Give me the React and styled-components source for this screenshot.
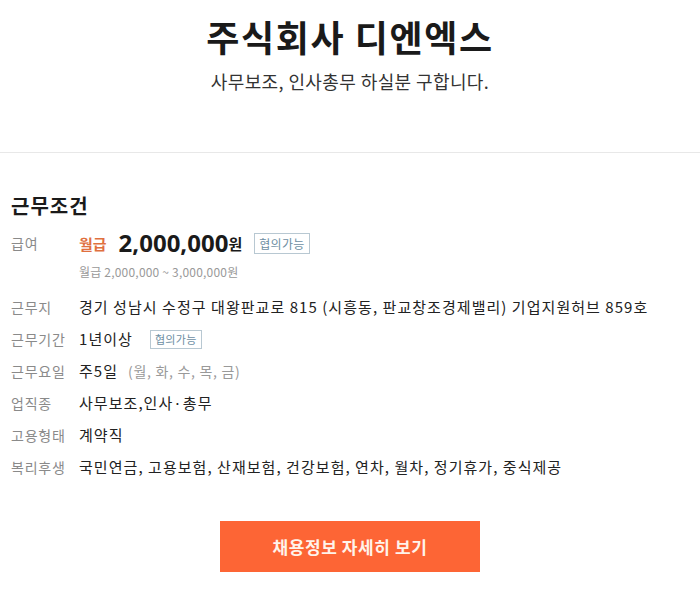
import React from "react";
import styled, { createGlobalStyle } from "styled-components";

const GlobalStyle = createGlobalStyle`
  body {
    margin: 0;
    background: #fff;
    font-family: "Noto Sans CJK KR", "Noto Sans", sans-serif;
    color: #222;
  }
`;

const rows = [
  {
    label: "근무지",
    value: "경기 성남시 수정구 대왕판교로 815 (시흥동, 판교창조경제밸리) 기업지원허브 859호",
  },
  { label: "근무기간", value: "1년이상", badge: true },
  { label: "근무요일", value: "주5일", extra: "(월, 화, 수, 목, 금)" },
  { label: "업직종", value: "사무보조,인사·총무" },
  { label: "고용형태", value: "계약직" },
  {
    label: "복리후생",
    value: "국민연금, 고용보험, 산재보험, 건강보험, 연차, 월차, 정기휴가, 중식제공",
  },
];

const App = () => {
  return (
    <Page>
      <GlobalStyle />
      <Header>
        <Title>주식회사 디엔엑스</Title>
        <Subtitle>사무보조, 인사총무 하실분 구합니다.</Subtitle>
      </Header>
      <Section>
        <SectionTitle>근무조건</SectionTitle>
        <InfoList>
          <Row $tall>
            <Label>급여</Label>
            <div>
              <SalaryLine>
                <PayType>월급</PayType>
                <Amount>2,000,000</Amount>
                <Won>원</Won>
                <Badge>협의가능</Badge>
              </SalaryLine>
              <SalaryRange>월급 2,000,000 ~ 3,000,000원</SalaryRange>
            </div>
          </Row>
          {rows.map((r) => (
            <Row key={r.label}>
              <Label>{r.label}</Label>
              <Value>
                {r.value}
                {r.extra && <Extra>{r.extra}</Extra>}
                {r.badge && <Badge $small>협의가능</Badge>}
              </Value>
            </Row>
          ))}
        </InfoList>
        <ButtonWrap>
          <DetailButton>채용정보 자세히 보기</DetailButton>
        </ButtonWrap>
      </Section>
    </Page>
  );
};

export default App;

const Page = styled.div`
  width: 700px;
  min-height: 613px;
`;

const Header = styled.header`
  display: flex;
  flex-direction: column;
  align-items: center;
  padding-top: 13px;
  height: 139px;
  border-bottom: 1px solid #e8e8e8;
`;

const Title = styled.h1`
  margin: 0;
  font-size: 36px;
  line-height: 46px;
  font-weight: 700;
  color: #1a1a1a;
  letter-spacing: 1.6px;
`;

const Subtitle = styled.p`
  margin: 0;
  margin-top: 10px;
  font-size: 18px;
  line-height: 24px;
  color: #333;
  letter-spacing: 0.4px;
`;

const Section = styled.section`
  padding: 39px 11px 0;
`;

const SectionTitle = styled.h2`
  margin: 0;
  font-size: 20px;
  line-height: 28px;
  font-weight: 700;
  color: #1a1a1a;
  letter-spacing: 1px;
`;

const InfoList = styled.div`
  margin-top: 12px;
  display: flex;
  flex-direction: column;
`;

const Row = styled.div`
  display: grid;
  grid-template-columns: 68px 1fr;
  align-items: start;
  min-height: 32px;
  ${(p) => p.$tall && "min-height: 64px;"}
`;

const Label = styled.span`
  font-size: 14px;
  line-height: 22px;
  color: #8a8a8a;
  letter-spacing: 0.8px;
`;

const Value = styled.span`
  display: flex;
  align-items: center;
  font-size: 15px;
  line-height: 22px;
  color: #222;
  letter-spacing: 1.05px;
`;

const Extra = styled.span`
  margin-left: 10px;
  font-size: 14px;
  color: #999;
  letter-spacing: 0.7px;
`;

const SalaryLine = styled.div`
  display: flex;
  align-items: center;
  height: 22px;
`;

const PayType = styled.span`
  font-size: 15px;
  font-weight: 700;
  color: #e0703f;
`;

const Amount = styled.span`
  margin-left: 12px;
  font-family: "Noto Sans", sans-serif;
  font-size: 24px;
  font-weight: 700;
  color: #1a1a1a;
  line-height: 22px;
`;

const Won = styled.span`
  font-size: 15px;
  font-weight: 700;
  color: #1a1a1a;
`;

const Badge = styled.span`
  display: inline-flex;
  align-items: center;
  margin-left: ${(p) => (p.$small ? "17px" : "12px")};
  padding: 0 4px;
  height: ${(p) => (p.$small ? "17px" : "19px")};
  border: 1px solid #b8c8d2;
  font-size: ${(p) => (p.$small ? "11px" : "12px")};
  color: #6d8ea2;
  letter-spacing: 0.3px;
`;

const SalaryRange = styled.div`
  margin-top: 9px;
  font-size: 12px;
  line-height: 18px;
  color: #999;
  letter-spacing: 0.2px;
`;

const ButtonWrap = styled.div`
  display: flex;
  justify-content: center;
  margin-top: 33px;
`;

const DetailButton = styled.button`
  width: 260px;
  height: 51px;
  border: none;
  background: #fd6535;
  color: #fff3ea;
  font-family: inherit;
  font-size: 17px;
  font-weight: 700;
  letter-spacing: 0.6px;
  cursor: pointer;
`;
